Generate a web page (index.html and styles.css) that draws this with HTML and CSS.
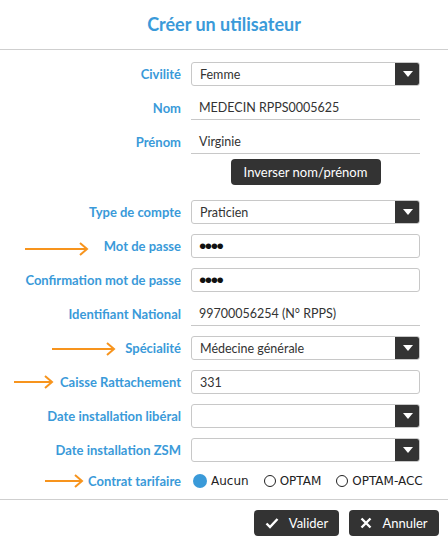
FILE: index.html
```html
<!DOCTYPE html>
<html lang="fr">
<head>
<meta charset="utf-8">
<link rel="stylesheet" href="styles.css">
</head>
<body>
<div class="dialog">
  <header class="head"><h1 class="title">Créer un utilisateur</h1></header>
  <main class="form">
    <div class="row">
      <label class="lbl">Civilité</label>
      <div class="select"><span class="val">Femme</span><span class="caret"><svg width="10" height="6" viewBox="0 0 10 6"><path d="M0 0H10L5 6Z" fill="#fff"/></svg></span></div>
    </div>
    <div class="row">
      <label class="lbl">Nom</label>
      <div class="plain"><span class="val">MEDECIN RPPS0005625</span></div>
    </div>
    <div class="row">
      <label class="lbl">Prénom</label>
      <div class="plain"><span class="val">Virginie</span></div>
    </div>
    <div class="row btnrow">
      <span></span>
      <div class="center"><button class="dark inv">Inverser nom/prénom</button></div>
    </div>
    <div class="row">
      <label class="lbl">Type de compte</label>
      <div class="select"><span class="val">Praticien</span><span class="caret"><svg width="10" height="6" viewBox="0 0 10 6"><path d="M0 0H10L5 6Z" fill="#fff"/></svg></span></div>
    </div>
    <div class="row">
      <svg class="arrow a-mdp" width="64" height="14" viewBox="0 0 64 14"><path d="M0 7H62M55 1L62 7L55 13" fill="none" stroke="#f7941d" stroke-width="2"/></svg>
      <label class="lbl">Mot de passe</label>
      <div class="input"><span class="dots">••••</span></div>
    </div>
    <div class="row">
      <label class="lbl">Confirmation mot de passe</label>
      <div class="input"><span class="dots">••••</span></div>
    </div>
    <div class="row">
      <label class="lbl">Identifiant National</label>
      <div class="plain"><span class="val">99700056254 (N° RPPS)</span></div>
    </div>
    <div class="row">
      <svg class="arrow a-spec" width="64" height="14" viewBox="0 0 64 14"><path d="M0 7H62M55 1L62 7L55 13" fill="none" stroke="#f7941d" stroke-width="2"/></svg>
      <label class="lbl">Spécialité</label>
      <div class="select"><span class="val">Médecine générale</span><span class="caret"><svg width="10" height="6" viewBox="0 0 10 6"><path d="M0 0H10L5 6Z" fill="#fff"/></svg></span></div>
    </div>
    <div class="row">
      <svg class="arrow a-caisse" width="40" height="14" viewBox="0 0 40 14"><path d="M0 7H38M31 1L38 7L31 13" fill="none" stroke="#f7941d" stroke-width="2"/></svg>
      <label class="lbl">Caisse Rattachement</label>
      <div class="input"><span class="val">331</span></div>
    </div>
    <div class="row">
      <label class="lbl">Date installation libéral</label>
      <div class="select"><span class="val"></span><span class="caret"><svg width="10" height="6" viewBox="0 0 10 6"><path d="M0 0H10L5 6Z" fill="#fff"/></svg></span></div>
    </div>
    <div class="row">
      <label class="lbl">Date installation ZSM</label>
      <div class="select"><span class="val"></span><span class="caret"><svg width="10" height="6" viewBox="0 0 10 6"><path d="M0 0H10L5 6Z" fill="#fff"/></svg></span></div>
    </div>
    <div class="row radiorow">
      <svg class="arrow a-contrat" width="39" height="14" viewBox="0 0 39 14"><path d="M0 7H37M30 1L37 7L30 13" fill="none" stroke="#f7941d" stroke-width="2"/></svg>
      <label class="lbl">Contrat tarifaire</label>
      <div class="radios">
        <span class="radio"><span class="dot on"></span>Aucun</span>
        <span class="radio"><span class="dot"></span>OPTAM</span>
        <span class="radio"><span class="dot"></span>OPTAM-ACC</span>
      </div>
    </div>
  </main>
  <footer class="foot">
    <button class="dark act valider"><svg width="14" height="12" viewBox="0 0 14 12"><path d="M1.5 6.5L5 10L12.5 2" fill="none" stroke="#fff" stroke-width="2.4"/></svg>Valider</button>
    <button class="dark act annuler"><svg width="12" height="12" viewBox="0 0 12 12"><path d="M1.5 1.5L10.5 10.5M10.5 1.5L1.5 10.5" fill="none" stroke="#fff" stroke-width="2.4"/></svg>Annuler</button>
  </footer>
</div>
</body>
</html>
```
FILE: styles.css
```css
* { box-sizing: border-box; }
html, body { margin: 0; padding: 0; background: #fff; }
body { font-family: Lato, "Open Sans", sans-serif; color: #333; width: 448px; height: 543px; overflow: hidden; }
.dialog { width: 448px; }
.head { height: 50px; border-bottom: 1px solid #cfcfcf; display: flex; align-items: center; justify-content: center; }
.title { margin: 0; font-size: 18px; font-weight: 700; color: #3a9ad9; position: relative; top: -1px; }
.form { display: flex; flex-direction: column; gap: 10px; padding: 12px 28px 9px 0; }
.row { display: grid; grid-template-columns: 181px 229px; column-gap: 10px; height: 24px; align-items: center; position: relative; }
.lbl { text-align: right; font-size: 13px; font-weight: 700; color: #3a9ad9; white-space: nowrap; }
.val { font-size: 12.5px; color: #333; padding-left: 8px; white-space: nowrap; }
.select { height: 24px; border: 1px solid #c8c8c8; border-radius: 3px; display: flex; align-items: center; justify-content: space-between; background: #fff; overflow: hidden; }
.caret { width: 25px; height: 24px; margin-right: -1px; background: #333; display: flex; align-items: center; justify-content: center; border-radius: 0 3px 3px 0; padding-bottom: 1px; }
.input { height: 24px; border: 1px solid #c8c8c8; border-radius: 3px; display: flex; align-items: center; }
.plain { height: 24px; border-bottom: 1px solid #c8c8c8; display: flex; align-items: center; }
.dots { font-family: "Liberation Sans", sans-serif; font-size: 21px; letter-spacing: -1.5px; color: #111; padding-left: 7px; line-height: 1; position: relative; top: -1px; }
.btnrow { height: 26px; margin-top: -5px; margin-bottom: 5px; }
.center { display: flex; justify-content: center; }
.dark { background: #333; color: #fff; border: none; border-radius: 4px; font-family: Lato, "Open Sans", sans-serif; font-size: 13px; cursor: pointer; }
.inv { width: 150px; height: 26px; padding: 0; }
.radiorow { height: 18px; }
.radios { display: flex; align-items: center; padding-left: 2px; font-family: "DejaVu Sans", sans-serif; font-size: 12px; color: #222; white-space: nowrap; }
.radio { display: inline-flex; align-items: center; margin-right: 15px; }
.dot { width: 12px; height: 12px; border: 1.5px solid #222; border-radius: 50%; margin-right: 4px; }
.dot.on { width: 14px; height: 14px; border: none; background: #3a9ad9; margin-right: 4px; }
.arrow { position: absolute; top: 50%; transform: translateY(-50%); }
.a-mdp { left: 25px; margin-top: 3px; }
.a-spec { left: 52px; margin-top: 1px; }
.a-caisse { left: 14px; }
.a-contrat { left: 45px; }
.foot { border-top: 1px solid #cfcfcf; display: flex; justify-content: flex-end; gap: 10px; padding: 10px 9px 0 0; }
.act { height: 26px; display: inline-flex; align-items: center; justify-content: center; gap: 10px; font-size: 13px; }
.valider { width: 85px; }
.annuler { width: 90px; }
```
